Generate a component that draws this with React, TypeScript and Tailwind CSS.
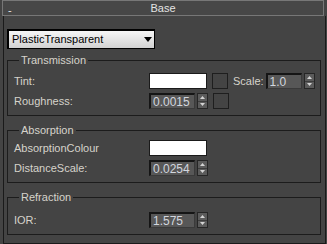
const labelText = "text-[11px] leading-[13px] text-[#d6d3cb]";

const SpinArrows = () => (
  <div className="flex h-[16px] w-[11px] flex-col border border-[#262626] bg-[#5b5b5b]">
    <div className="flex flex-1 items-center justify-center border-b border-[#3c3c3c]">
      <svg width="5" height="3" viewBox="0 0 5 3">
        <polygon points="2.5,0 5,3 0,3" fill="#d4d4d4" />
      </svg>
    </div>
    <div className="flex flex-1 items-center justify-center">
      <svg width="5" height="3" viewBox="0 0 5 3">
        <polygon points="0,0 5,0 2.5,3" fill="#d4d4d4" />
      </svg>
    </div>
  </div>
);

const Spinner = ({ value, width }: { value: string; width: string }) => (
  <div className="flex items-center gap-[2px]">
    <div
      className={`flex h-[16px] items-center border-t-2 border-l-2 border-r border-b border-t-[#151515] border-l-[#151515] border-r-[#3a3a3a] border-b-[#3a3a3a] bg-[#575757] pl-[2px] text-[12px] text-[#d2d6de] ${width}`}
    >
      {value}
    </div>
    <SpinArrows />
  </div>
);

const Swatch = () => (
  <div className="h-[16px] w-[58px] border border-[#1a1a1a] bg-white" />
);

const EmptySlot = () => (
  <div className="h-[16px] w-[16px] border border-[#1e1e1e] bg-[#444444]" />
);

const Group = ({
  title,
  className,
  children,
}: {
  title: string;
  className: string;
  children: React.ReactNode;
}) => (
  <fieldset
    className={`ml-[3px] w-[314px] border border-[#1c1c1c] pl-[6px] pb-[6px] ${className}`}
  >
    <legend className={`ml-[5px] px-[2px] ${labelText}`}>{title}</legend>
    {children}
  </fieldset>
);

const Row = ({ label, children }: { label: string; children: React.ReactNode }) => (
  <div className="flex items-center">
    <span className={`w-[135px] ${labelText}`}>{label}</span>
    {children}
  </div>
);

export default function App() {
  return (
    <div className="h-[244px] w-[327px] overflow-hidden bg-[#444444] font-['Liberation_Sans',Arial,sans-serif]">
      <div className="ml-[2px] grid h-[16px] w-[322px] grid-cols-[20px_1fr_20px] items-center border border-[#777777] bg-[#474747] text-[11px] text-[#e4e4e4]">
        <span className="translate-y-[2px] pl-[5px] leading-[12px]">-</span>
        <span className="text-center leading-[12px]">Base</span>
        <span />
      </div>

      <div className="ml-[3px] h-[228px] w-[323px] border-l border-r border-b border-[#1a1a1a] pl-0 pt-[13px]">
        <div className="ml-[3px] flex h-[20px] w-[148px] items-center justify-between border-t-2 border-l-2 border-r border-b border-black bg-gradient-to-b from-[#f6f6f6] to-[#d2d2d2] pl-[3px] pr-[2px]">
          <span className="text-[11px] leading-[13px] text-black">PlasticTransparent</span>
          <svg width="8" height="5" viewBox="0 0 8 5">
            <polygon points="0,0 8,0 4,5" fill="#000" />
          </svg>
        </div>

        <Group title="Transmission" className="mt-[5px] pt-[6px]">
          <div className="flex flex-col gap-[4px]">
            <Row label="Tint:">
              <Swatch />
              <div className="ml-[5px]">
                <EmptySlot />
              </div>
              <span className={`ml-[5px] ${labelText}`}>Scale:</span>
              <div className="ml-[2px]">
                <Spinner value="1.0" width="w-[36px]" />
              </div>
            </Row>
            <Row label="Roughness:">
              <Spinner value="0.0015" width="w-[46px]" />
              <div className="ml-[5px]">
                <EmptySlot />
              </div>
            </Row>
          </div>
        </Group>

        <Group title="Absorption" className="mt-[8px] pt-[3px]">
          <div className="flex flex-col gap-[4px]">
            <Row label="AbsorptionColour">
              <Swatch />
            </Row>
            <Row label="DistanceScale:">
              <Spinner value="0.0254" width="w-[46px]" />
            </Row>
          </div>
        </Group>

        <Group title="Refraction" className="mt-[8px] pt-[8px]">
          <Row label="IOR:">
            <Spinner value="1.575" width="w-[46px]" />
          </Row>
        </Group>
      </div>
    </div>
  );
}
